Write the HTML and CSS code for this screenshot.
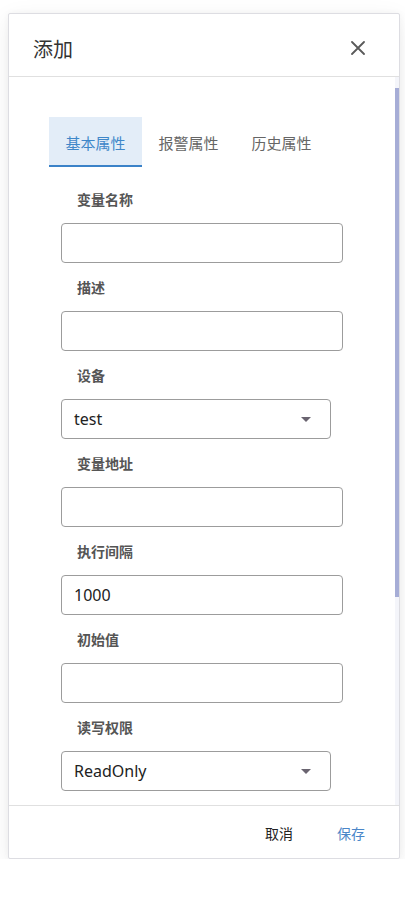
FILE: index.html
```html
<!DOCTYPE html>
<html lang="zh">
<head>
<meta charset="utf-8">
<title>添加</title>
<link rel="stylesheet" href="styles.css">
</head>
<body>
<div class="dialog">
  <div class="dialog-header">
    <div class="dialog-title">添加</div>
    <button class="close-btn" aria-label="关闭">
      <svg width="14" height="14" viewBox="0 0 14 14"><path d="M1 1 L13 13 M13 1 L1 13" stroke="#5a5a5a" stroke-width="1.8" stroke-linecap="round" fill="none"/></svg>
    </button>
  </div>
  <div class="dialog-body">
    <div class="tabs">
      <div class="tab active">基本属性</div>
      <div class="tab">报警属性</div>
      <div class="tab">历史属性</div>
    </div>
    <div class="form">
      <div class="field">
        <label class="label">变量名称</label>
        <div class="input"></div>
      </div>
      <div class="field">
        <label class="label">描述</label>
        <div class="input"></div>
      </div>
      <div class="field">
        <label class="label">设备</label>
        <div class="input select"><span class="value">test</span><svg class="arrow" width="10" height="5" viewBox="0 0 10 5"><path d="M0 0 L10 0 L5 5 Z" fill="#6a6470"/></svg></div>
      </div>
      <div class="field">
        <label class="label">变量地址</label>
        <div class="input"></div>
      </div>
      <div class="field">
        <label class="label">执行间隔</label>
        <div class="input"><span class="value">1000</span></div>
      </div>
      <div class="field">
        <label class="label">初始值</label>
        <div class="input"></div>
      </div>
      <div class="field">
        <label class="label">读写权限</label>
        <div class="input select"><span class="value">ReadOnly</span><svg class="arrow" width="10" height="5" viewBox="0 0 10 5"><path d="M0 0 L10 0 L5 5 Z" fill="#6a6470"/></svg></div>
      </div>
    </div>
  </div>
  <div class="scrollbar"><div class="scroll-thumb"></div></div>
  <div class="dialog-footer">
    <button class="btn">取消</button>
    <button class="btn primary">保存</button>
  </div>
</div>
</body>
</html>
```
FILE: styles.css
```css
html, body {
  margin: 0;
  padding: 0;
  background: #ffffff;
}
body {
  padding: 13px 5px 0 8px;
  font-family: "Noto Sans", "Noto Sans CJK SC", sans-serif;
  color: #222;
}
.dialog {
  position: relative;
  width: 392px;
  box-sizing: border-box;
  border: 1px solid #dddde2;
  border-radius: 2px;
  background: #fff;
  box-shadow: 0 6px 24px rgba(0,0,0,0.07), 0 0 6px rgba(0,0,0,0.04);
  display: flex;
  flex-direction: column;
}
.dialog-header {
  height: 63px;
  box-sizing: border-box;
  padding: 8px 24px 0 24px;
  display: flex;
  align-items: center;
  justify-content: space-between;
  border-bottom: 1px solid #e0e0e0;
}
.dialog-title {
  font-size: 20px;
  line-height: 28px;
  color: #333;
  font-family: "Noto Sans CJK SC", sans-serif;
}
.close-btn {
  border: none;
  background: none;
  padding: 0;
  width: 14px;
  height: 14px;
  margin-right: 10px;
  margin-top: -2px;
  display: flex;
}
.dialog-body {
  height: 728px;
  overflow: hidden;
  padding: 40px 0 0 40px;
  box-sizing: border-box;
}
.scrollbar {
  position: absolute;
  right: 0;
  top: 63px;
  width: 4px;
  height: 728px;
  background: #f4f5fa;
}
.scroll-thumb {
  margin-top: 11px;
  height: 509px;
  background: #a6add6;
}
.tabs {
  display: flex;
}
.tab {
  width: 93px;
  box-sizing: border-box;
  text-align: center;
  font-size: 15px;
  line-height: 20px;
  padding: 16px 0 12px;
  border-bottom: 2px solid transparent;
  color: #666;
  font-family: "Noto Sans CJK SC", sans-serif;
}
.tab.active {
  background: #e3edf8;
  color: #3f87c9;
  border-bottom-color: #3b82c8;
}
.form {
  padding: 22px 0 20px 12px;
  display: flex;
  flex-direction: column;
  gap: 14px;
}
.field {
  display: flex;
  flex-direction: column;
  gap: 14px;
}
.label {
  padding-left: 16px;
  font-size: 14px;
  line-height: 20px;
  font-weight: bold;
  color: #555;
  font-family: "Noto Sans CJK SC", sans-serif;
}
.input {
  width: 282px;
  height: 40px;
  box-sizing: border-box;
  border: 1px solid #9c9c9c;
  border-radius: 4px;
  padding: 0 12px;
  display: flex;
  align-items: center;
  font-size: 16px;
  color: #222;
}
.input.select {
  width: 270px;
  justify-content: space-between;
  padding-right: 19px;
}
.value {
  line-height: 22px;
}
.arrow {
  display: block;
}
.dialog-footer {
  height: 53px;
  box-sizing: border-box;
  border-top: 1px solid #e0e0e0;
  display: flex;
  justify-content: flex-end;
  align-items: center;
  gap: 12px;
  padding: 2px 18px 0 0;
}
.btn {
  border: none;
  background: none;
  font-size: 14px;
  line-height: 20px;
  padding: 0 16px;
  color: #222;
  font-family: "Noto Sans CJK SC", sans-serif;
}
.btn.primary {
  color: #4a86c8;
}
```
